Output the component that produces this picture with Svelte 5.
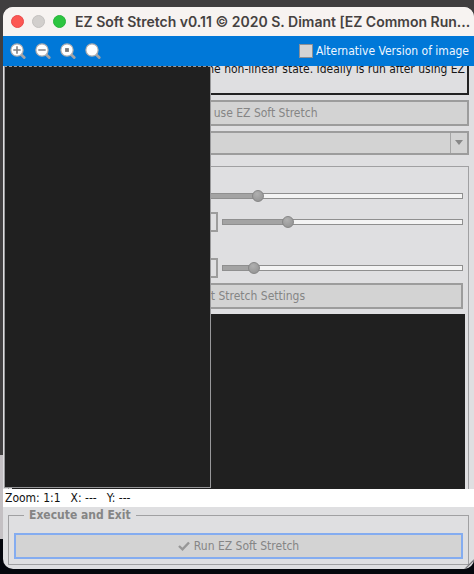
<script>
	let altVersion = false;
	let preset = '';

	let median = 54.5;
	let expand = 26;
	let blackpoint = 11;

	const tools = [
		{ name: 'Zoom in', icon: 'plus' },
		{ name: 'Zoom out', icon: 'minus' },
		{ name: 'Zoom 1:1', icon: 'dot' },
		{ name: 'Zoom to fit', icon: 'none' }
	];
</script>

<div class="desktop">
	<div class="window">
		<header class="titlebar">
			<div class="lights">
				<button class="light close" aria-label="Close"></button>
				<button class="light minimize" aria-label="Minimize"></button>
				<button class="light maximize" aria-label="Maximize"></button>
			</div>
			<h1>EZ Soft Stretch v0.11 © 2020 S. Dimant [EZ Common Run...</h1>
		</header>

		<div class="toolbar">
			{#each tools as tool}
				<button class="tool" aria-label={tool.name}>
					<svg viewBox="0 0 16 16" width="16" height="16">
						<path d="M10.6 11 L14.2 14.6" stroke="#a0a3a8" stroke-width="2.8" stroke-linecap="round" />
						<circle cx="7" cy="7" r="6.1" fill="#fff" stroke="#b4b0ae" stroke-width="1.2" />
						{#if tool.icon === 'plus'}
							<path d="M3.3 7 H10.7 M7 3.3 V10.7" stroke="#808184" stroke-width="1.6" />
						{:else if tool.icon === 'minus'}
							<path d="M3.3 7 H10.7" stroke="#808184" stroke-width="1.6" />
						{:else if tool.icon === 'dot'}
							<rect x="5.1" y="5.1" width="3.8" height="3.8" fill="#77787b" />
						{/if}
					</svg>
				</button>
			{/each}
			<label class="alt">
				<input type="checkbox" bind:checked={altVersion} />
				Alternative Version of image
			</label>
		</div>

		<main class="workspace">
			<div class="controls">
				<div class="about">
					<p>further post processing in the non-linear state. Ideally is run after using EZ</p>
				</div>
				<button class="btn" disabled>How to use EZ Soft Stretch</button>
				<select bind:value={preset} disabled aria-label="Main view">
					<option value=""></option>
				</select>
				<div class="settings">
					<div class="row">
						<input type="range" step="any" aria-label="Target median" bind:value={median} style="--fill: {median}%" />
					</div>
					<div class="row second">
						<input class="value" type="text" aria-label="Expand low value" />
						<input type="range" step="any" aria-label="Expand low" bind:value={expand} style="--fill: {expand}%" />
					</div>
					<div class="row third">
						<input class="value" type="text" aria-label="Black point value" />
						<input type="range" step="any" aria-label="Black point" bind:value={blackpoint} style="--fill: {blackpoint}%" />
					</div>
					<button class="btn reset" disabled>Reset Stretch Settings</button>
					<div class="image"></div>
				</div>
			</div>
			<div class="preview"></div>
		</main>

		<div class="status">
			<span>Zoom: 1:1</span>
			<span>X: ---</span>
			<span>Y: ---</span>
		</div>

		<footer>
			<fieldset>
				<legend>Execute and Exit</legend>
				<button class="run" disabled>
					<svg viewBox="0 0 12 10" width="12" height="10">
						<path d="M1 5 L4.5 8.3 L11 1.5" fill="none" stroke="#979797" stroke-width="2.4" />
					</svg>
					Run EZ Soft Stretch
				</button>
			</fieldset>
			<svg class="grip" viewBox="0 0 10 10" width="10" height="10">
				<path d="M1 10 L10 1 M5 10 L10 5" stroke="#77777a" stroke-width="1.2" />
			</svg>
		</footer>
	</div>
</div>

<style>
	:global(body) {
		margin: 0;
		font-family: "DejaVu Sans Condensed", "DejaVu Sans", sans-serif;
		font-size: 12px;
		line-height: 16px;
	}

	* {
		box-sizing: border-box;
	}

	button, input, select {
		margin: 0;
		padding: 0;
		border-radius: 0;
		font: inherit;
	}

	.desktop {
		display: flex;
		min-height: 100vh;
		padding: 7px 0 5px 3px;
		background: linear-gradient(#403e3f 455px, #c4c0c3 455px, #c4c0c3 539px, #05070d 539px);
	}

	.window {
		display: flex;
		flex: 1;
		flex-direction: column;
		min-width: 0;
		border-radius: 10px;
		overflow: hidden;
		background: #dfdfe1;
	}

	.titlebar {
		display: flex;
		align-items: center;
		gap: 9px;
		height: 29px;
		padding: 0 8px;
		background: #f7f3f1;
	}

	.lights {
		display: flex;
		gap: 8px;
	}

	.light {
		width: 13px;
		height: 13px;
		border: 1px solid #e9494a;
		border-radius: 50%;
		background: #fc5753;
	}

	.minimize {
		border-color: #c3c0bf;
		background: #d2cfcd;
	}

	.maximize {
		border-color: #28b43c;
		background: #2cc540;
	}

	h1 {
		margin: 0;
		font: 600 14px/20px Inter, sans-serif;
		color: #454140;
		white-space: nowrap;
	}

	.toolbar {
		display: flex;
		align-items: center;
		gap: 9px;
		height: 30px;
		padding: 0 5px 0 7px;
		background: #0078d8;
	}

	.tool {
		width: 16px;
		height: 16px;
		border: none;
		background: none;
	}

	.tool svg, .run svg {
		display: block;
	}

	.alt {
		display: flex;
		align-items: center;
		gap: 3px;
		margin-left: auto;
		color: #eef6ff;
		white-space: nowrap;
	}

	.alt input {
		appearance: none;
		width: 14px;
		height: 14px;
		border: 1px solid #8c9096;
		background: #d4d4d4;
	}

	.workspace {
		position: relative;
		display: flex;
		flex: 1;
		overflow: hidden;
	}

	.controls {
		display: flex;
		flex: 1;
		flex-direction: column;
		min-width: 0;
		padding: 0 5px;
	}

	.about {
		display: flex;
		align-items: flex-start;
		justify-content: flex-end;
		height: 29px;
		padding-right: 2px;
		border: 2px solid #222;
		border-top: none;
		overflow: hidden;
	}

	.about p {
		margin: -5px 0 0;
		color: #161616;
		white-space: nowrap;
	}

	.btn {
		height: 26px;
		margin-top: 5px;
		padding-left: 13px;
		border: 2px solid #9c9c9c;
		background: #d3d3d3;
		color: #858585;
	}

	select {
		appearance: none;
		height: 24px;
		margin-top: 5px;
		border: 2px solid #9c9c9c;
		background:
			linear-gradient(#a6a6a6, #a6a6a6) right 16px top / 1px 100% no-repeat,
			url('data:image/svg+xml,<svg xmlns="http://www.w3.org/2000/svg" width="10" height="6"><path d="M1 0H9L5 5Z" fill="%23888"/></svg>') right 3px center no-repeat,
			#d3d3d3;
		opacity: 1;
	}

	.settings {
		display: flex;
		flex: 1;
		flex-direction: column;
		margin-top: 11px;
		padding: 19px 3px 0;
		border: 1px solid #a0a0a2;
		border-bottom: none;
	}

	.row {
		display: flex;
		align-items: center;
		gap: 4px;
		height: 20px;
		padding: 0 2px;
	}

	.second {
		margin-top: 6px;
	}

	.third {
		margin-top: 26px;
	}

	.value {
		width: 204px;
		height: 20px;
		border: 2px solid #9c9c9c;
		background: #dfdfe1;
	}

	input[type="range"] {
		appearance: none;
		flex: 1;
		min-width: 0;
		height: 6px;
		border: 1px solid #8f8f8f;
		background: linear-gradient(to right, #a3a3a3 var(--fill), #f4f4f4 var(--fill));
	}

	input[type="range"]::-webkit-slider-thumb {
		appearance: none;
		width: 12px;
		height: 12px;
		border: 1px solid #868686;
		border-radius: 50%;
		background: radial-gradient(circle at 40% 30%, #b0b0b0, #8f8f8f);
	}

	.reset {
		margin: 5px 2px 0;
	}

	.image {
		flex: 1;
		min-height: 80px;
		margin-top: 5px;
		background: #202020;
	}

	.preview {
		position: absolute;
		top: 0;
		bottom: 1px;
		left: 1px;
		width: 207px;
		border: 1px solid #98989a;
		border-top-style: dashed;
		background: #202020;
	}

	.status {
		display: flex;
		gap: 10px;
		height: 18px;
		padding: 0 2px;
		background: #fff;
		color: #111;
		line-height: 18px;
	}

	footer {
		position: relative;
		padding: 0 5px 4px;
	}

	fieldset {
		display: flex;
		min-width: 0;
		margin: 0;
		padding: 10px 5px 5px;
		border: 1px solid #a0a0a2;
	}

	legend {
		margin-left: 10px;
		padding: 0 5px;
		color: #858585;
		font-weight: bold;
	}

	.run {
		display: flex;
		flex: 1;
		align-items: center;
		justify-content: center;
		gap: 4px;
		height: 26px;
		border: 2px solid #84acf0;
		background: #d3d3d3;
		color: #858585;
	}

	.grip {
		position: absolute;
		right: 0;
		bottom: 0;
	}
</style>
